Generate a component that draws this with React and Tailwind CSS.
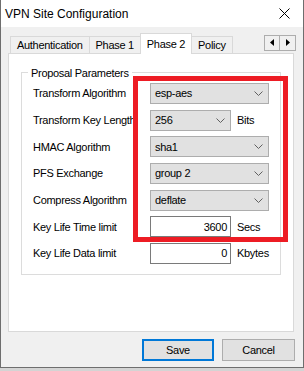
import React from 'react';

const font = { fontFamily: '"Liberation Sans", Arial, sans-serif' };

function Chevron() {
  return (
    <svg width="9" height="5" viewBox="0 0 9 5" className="shrink-0">
      <path d="M0.5 0.5 L4.5 4.5 L8.5 0.5" fill="none" stroke="#606060" strokeWidth="1" />
    </svg>
  );
}

function Select({ value, wide = true }) {
  return (
    <div
      className={`flex h-[21px] items-center justify-between border border-[#adadad] bg-[#e1e1e1] pl-[4px] pr-[5px] ${wide ? 'w-[119px]' : 'w-[81px]'}`}
    >
      <span>{value}</span>
      <Chevron />
    </div>
  );
}

function NumberBox({ value }) {
  return (
    <div className="flex h-[21px] w-[81px] items-center justify-end border border-[#7a7a7a] bg-white pr-[3px]">
      {value}
    </div>
  );
}

function Row({ label, children }) {
  return (
    <div className="flex h-[21px] items-center">
      <div className="w-[117px] shrink-0 whitespace-nowrap">{label}</div>
      <div className="flex items-center gap-[6px]">{children}</div>
    </div>
  );
}

export default function App() {
  return (
    <div className="relative h-[371px] w-[304px] bg-white text-[11px] tracking-[-0.3px] text-black" style={font}>
      <div className="flex h-[368px] w-[304px] flex-col border-x border-b border-[#6e6e6e]">
        {/* title bar */}
        <div className="flex h-[27px] items-center justify-between bg-white pl-[4px] pr-[13px]">
          <span className="text-[12px] tracking-normal">VPN Site Configuration</span>
          <svg width="11" height="11" viewBox="0 0 11 11">
            <path d="M0.5 0.5 L10.5 10.5 M10.5 0.5 L0.5 10.5" stroke="#000" strokeWidth="1" />
          </svg>
        </div>

        <div className="flex flex-1 flex-col bg-[#f0f0f0] px-[7px] pt-[6px]">
          {/* tabs */}
          <div className="flex h-[20px] items-end">
            <div className="ml-[2px] flex h-[17px] items-center border-t border-l border-[#d9d9d9] px-[6px]">Authentication</div>
            <div className="flex h-[17px] items-center border-t border-l border-[#d9d9d9] px-[6px]">Phase 1</div>
            <div className="relative z-10 -mb-px flex h-[21px] items-start border-x border-t border-[#d9d9d9] bg-white px-[6px] pt-[2px]">Phase 2</div>
            <div className="flex h-[17px] items-center border-t border-r border-[#d9d9d9] px-[6px]">Policy</div>
            <div className="mb-[1px] ml-auto mr-[0px] flex h-[16px] self-center">
              <div className="flex w-[16px] items-center justify-center border border-[#adadad] bg-[#f0f0f0]">
                <svg width="4" height="7" viewBox="0 0 4 7"><path d="M4 0 L0 3.5 L4 7 Z" fill="#000" /></svg>
              </div>
              <div className="flex w-[16px] items-center justify-center border-y border-r border-[#adadad] bg-[#f0f0f0]">
                <svg width="4" height="7" viewBox="0 0 4 7"><path d="M0 0 L4 3.5 L0 7 Z" fill="#000" /></svg>
              </div>
            </div>
          </div>

          {/* tab panel */}
          <div className="h-[279px] w-[286px] border border-[#d9d9d9] bg-white pl-[12px] pt-[18px]">
            <div className="relative h-[203px] w-[260px] border border-[#dcdcdc] pl-[11px] pt-[10px]">
              <span className="absolute -top-[8px] left-[6px] bg-white px-[3px]">Proposal Parameters</span>
              <div className="flex flex-col gap-[5.67px]">
                <Row label="Transform Algorithm"><Select value="esp-aes" /></Row>
                <Row label="Transform Key Length"><Select value="256" wide={false} /><span>Bits</span></Row>
                <Row label="HMAC Algorithm"><Select value="sha1" /></Row>
                <Row label="PFS Exchange"><Select value="group 2" /></Row>
                <Row label="Compress Algorithm"><Select value="deflate" /></Row>
                <Row label="Key Life Time limit"><NumberBox value="3600" /><span>Secs</span></Row>
                <Row label="Key Life Data limit"><NumberBox value="0" /><span>Kbytes</span></Row>
              </div>
            </div>
          </div>

          {/* buttons */}
          <div className="mt-[7px] flex justify-end gap-[8px] pr-[1px]">
            <button className="h-[22px] w-[72px] border-2 border-[#0078d7] bg-[#e1e1e1]">Save</button>
            <button className="h-[22px] w-[73px] border border-[#adadad] bg-[#e1e1e1]">Cancel</button>
          </div>
        </div>
      </div>
      <div className="h-[3px] w-[304px] bg-[#d4d4d4]" />

      {/* red annotation */}
      <div className="pointer-events-none absolute left-[133px] top-[76px] h-[166px] w-[155px] border-[5px] border-[#ed1c24]" />
    </div>
  );
}
